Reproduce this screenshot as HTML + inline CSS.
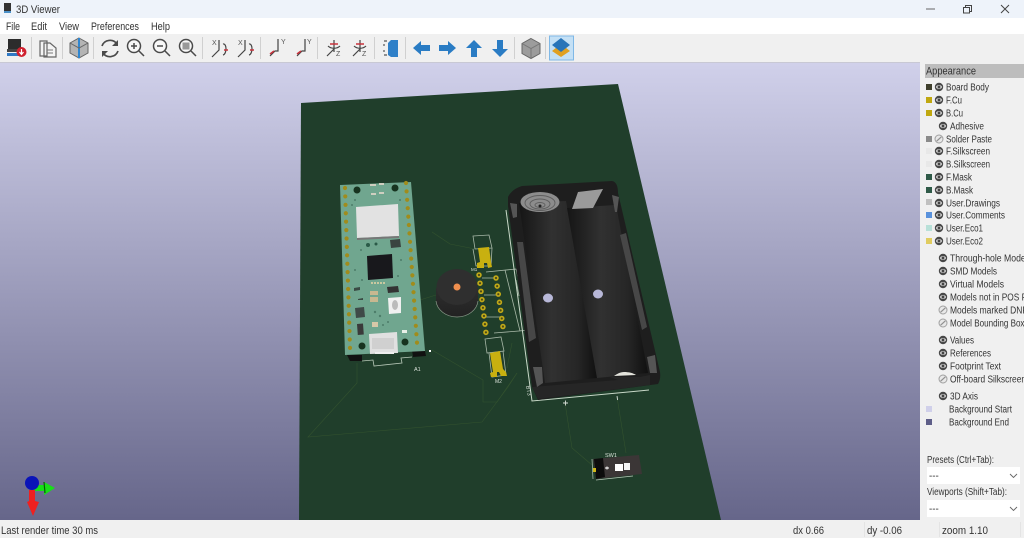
<!DOCTYPE html>
<html><head><meta charset="utf-8"><title>3D Viewer</title>
<style>
html,body{margin:0;padding:0;width:1024px;height:538px;overflow:hidden;background:#f0f0f0}
svg{display:block;filter:blur(.35px)}
text{font-family:"Liberation Sans",sans-serif;fill:#333}
.m{font-size:10.600px}
.p{font-size:9.800px}
.s{font-size:10.800px}
</style></head><body>
<svg width="1024" height="538" viewBox="0 0 1024 538" xmlns="http://www.w3.org/2000/svg" lengthAdjust="spacingAndGlyphs">
<defs>
<linearGradient id="bg" x1="0" y1="0" x2="0" y2="1"><stop offset="0" stop-color="#d0d0ea"/><stop offset="1" stop-color="#66668a"/></linearGradient>
<linearGradient id="cyl" x1="0" y1="0" x2="1" y2="0"><stop offset="0" stop-color="#151515"/><stop offset=".42" stop-color="#313131"/><stop offset=".75" stop-color="#262626"/><stop offset="1" stop-color="#101010"/></linearGradient>
<linearGradient id="bz" x1="0" y1="0" x2="0" y2="1"><stop offset="0" stop-color="#2e2e2e"/><stop offset="1" stop-color="#222"/></linearGradient>
<g id="eye"><circle r="4.200" fill="#484848"/><ellipse rx="3" ry="1.900" fill="#d4d4d4"/><circle r="1.400" fill="#444"/></g>
<g id="off"><circle r="4" fill="#e8e8e8" stroke="#a0a0a0" stroke-width="1"/><path d="M-2.400 2.200L2.400-2.200" stroke="#909090" stroke-width="1.200"/></g>
</defs>

<!-- chrome -->
<rect width="1024" height="18" fill="#eef3fa"/>
<rect y="18" width="1024" height="16" fill="#fff"/>
<rect y="34" width="1024" height="29" fill="#f0f0f0"/>
<rect y="62" width="920" height="1" fill="#c8c8d4"/>
<path d="M4 3h7v8H4z" fill="#333"/><path d="M4 11h7v2H4z" fill="#4a90c8"/>
<text x="16" y="13" font-size="11" textLength="44" lengthAdjust="spacingAndGlyphs">3D Viewer</text>
<path d="M926 9h9" stroke="#666" stroke-width="1"/>
<path d="M963.500 7.500h6v5.500h-6zM965.500 7.500v-2h6v6h-2" fill="none" stroke="#444" stroke-width="1"/>
<path d="M1001 5l8 8M1009 5l-8 8" stroke="#444" stroke-width="1"/>
<text class="m" x="6" y="30" textLength="14" lengthAdjust="spacingAndGlyphs">File</text>
<text class="m" x="31" y="30" textLength="16" lengthAdjust="spacingAndGlyphs">Edit</text>
<text class="m" x="59" y="30" textLength="20" lengthAdjust="spacingAndGlyphs">View</text>
<text class="m" x="91" y="30" textLength="48" lengthAdjust="spacingAndGlyphs">Preferences</text>
<text class="m" x="151" y="30" textLength="19" lengthAdjust="spacingAndGlyphs">Help</text>

<!-- toolbar separators -->
<path d="M31.500 37v22M62.500 37v22M93.500 37v22M202.500 37v22M260.500 37v22M317.500 37v22M374.500 37v22M405.500 37v22M514.500 37v22M545.500 37v22" stroke="#d0d0d0" stroke-width="1"/>
<!-- render icon -->
<rect x="8" y="39" width="13" height="10" fill="#2c2c2c"/><rect x="7" y="49" width="15" height="3" fill="#444"/><rect x="7" y="53" width="13" height="3" fill="#2f78c4"/>
<circle cx="21.500" cy="52" r="5" fill="#d0202e"/><path d="M21.500 49v5M19.500 52l2 2.500 2-2.500" stroke="#fff" fill="none" stroke-width="1.200"/>
<!-- copy -->
<path d="M40 41h7v15h-7zM44 43h6l6 5v9H44z" fill="#f4f4f4" stroke="#666" stroke-width="1.200"/><path d="M47 50h6M47 53h6" stroke="#777"/>
<!-- cube blue -->
<path d="M79 38l9 5v10l-9 5-9-5V43z" fill="#b4b4b4" stroke="#666"/><path d="M79 38v20" stroke="#2f86d0" stroke-width="2"/><path d="M70 43l9 5 9-5" fill="none" stroke="#666"/>
<!-- refresh -->
<path d="M102 46a8.500 8.500 0 0 1 15-2M118 51a8.500 8.500 0 0 1-15 2" fill="none" stroke="#4a4a4a" stroke-width="1.700"/><path d="M118 40v6h-6zM102 57v-6h6z" fill="#4a4a4a"/>
<!-- zoom -->
<circle cx="134" cy="46" r="6.500" fill="#f8f8f8" stroke="#4a4a4a" stroke-width="1.500"/><path d="M131 46h6M134 43v6M139 51l5 5" stroke="#4a4a4a" stroke-width="1.500"/>
<circle cx="160" cy="46" r="6.500" fill="#f8f8f8" stroke="#4a4a4a" stroke-width="1.500"/><path d="M157 46h6M165 51l5 5" stroke="#4a4a4a" stroke-width="1.500"/>
<circle cx="186" cy="46" r="6.500" fill="#f8f8f8" stroke="#4a4a4a" stroke-width="1.500"/><rect x="182.500" y="42.500" width="7" height="7" fill="#999"/><path d="M191 51l5 5" stroke="#4a4a4a" stroke-width="1.500"/>
<!-- rotate X -->
<g fill="none" stroke="#444" stroke-width="1.200">
<path d="M212 57l7-7V40"/><path d="M238 57l7-7V40"/>
<path d="M223 44c4-1 4 10 0 11"/><path d="M249 44c4-1 4 10 0 11"/>
<path d="M270 56l5-5h3V39"/><path d="M297 56l5-5h3V39"/>
<path d="M327 56l7-7"/><path d="M334 40v12"/><path d="M353 56l7-7"/><path d="M360 40v12"/>
<path d="M328 46c3 3 9 3 12 0M354 46c3 3 9 3 12 0"/>
</g>
<g><text x="212" y="45" style="font-size:7px;fill:#555">X</text><text x="238" y="45" style="font-size:7px;fill:#555">X</text><text x="281" y="44" style="font-size:7px;fill:#555">Y</text><text x="307" y="44" style="font-size:7px;fill:#555">Y</text><text x="336" y="56" style="font-size:7px;fill:#555">Z</text><text x="362" y="56" style="font-size:7px;fill:#555">Z</text></g>
<path d="M224 50h4M250 50h4M270 54l4-3M297 54l4-3M330 44h8M356 44h8" stroke="#c8323c" stroke-width="1.500"/>
<!-- ortho -->
<path d="M391 40h7v17h-7l-3-2V43z" fill="#2f80c8"/><path d="M384 41h3M384 44v2M384 50v2M384 55h3" stroke="#555" stroke-width="1.200" fill="none"/>
<!-- arrows -->
<path d="M413 48l8-7v4h9v6h-9v4z" fill="#2a7cc4"/>
<path d="M456 48l-8-7v4h-9v6h9v4z" fill="#2a7cc4"/>
<path d="M474 40l8 8h-5v9h-6v-9h-5z" fill="#2a7cc4"/>
<path d="M500 57l8-8h-5v-9h-6v9h-5z" fill="#2a7cc4"/>
<!-- cube gray -->
<path d="M531 38.500l9 5v10l-9 5-9-5v-10z" fill="#9c9c9c" stroke="#666"/><path d="M522 43.500l9 5 9-5M531 48.500v10" fill="none" stroke="#777"/>
<!-- active -->
<rect x="549.500" y="36" width="24" height="24" fill="#c4e0f5" stroke="#7fb8e6"/>
<path d="M561 44l9 7-9 6-9-6z" fill="#e0a020"/><path d="M561 38l9 7-9 7-9-7z" fill="#2874b8"/>

<!-- canvas -->
<rect x="0" y="63" width="920" height="457" fill="url(#bg)"/>
<path d="M301 103L618 84L721 520H299z" fill="#203e2b"/>

<!-- faint traces -->
<g fill="none" stroke="#33522f" stroke-width=".6">
<path d="M357 363v20L308 437 482 422 508 387 517 373"/>
<path d="M432 350l51 30v22h14l20-29"/>
<path d="M565 403l7 45 20 17M617 397l9 56"/>
<path d="M432 232l18 12 25 5M420 300l16-5M507 368l5-25"/>
</g>

<!-- silk under pico -->
<path d="M362 361l11-1 1 6 28-3-1-5 11-1" fill="none" stroke="#b8c8b8" stroke-width=".8"/>
<text x="414" y="371" style="font-size:5.500px;fill:#d8e0d8">A1</text>
<rect x="429" y="350" width="2" height="2" fill="#fff"/>

<!-- pico -->
<path d="M347 355h15v6h-12zM412 350l13 1 1 5-13 1z" fill="#111"/>
<path d="M340 185L411 182L425 351L345 355z" fill="#70a68f"/>
<path d="M345 188L350 348" stroke="#a08c1c" stroke-width="4.200" stroke-linecap="round" stroke-dasharray="0 8.420" fill="none"/>
<path d="M406 183L417 343" stroke="#a08c1c" stroke-width="4.200" stroke-linecap="round" stroke-dasharray="0 8.420" fill="none"/>
<circle cx="357" cy="190" r="3.500" fill="#17331f"/><circle cx="395" cy="188" r="3.500" fill="#17331f"/><circle cx="362" cy="346" r="3.500" fill="#17331f"/><circle cx="405" cy="342" r="3.500" fill="#17331f"/>
<path d="M370 185h6M379 184h5M371 194h5M379 193h5" stroke="#cfcfc0" stroke-width="2"/>
<path d="M356 207L398 204L399 236L357 238z" fill="#e2e2e2"/><path d="M357 238L399 236V238L357 240z" fill="#777"/>
<path d="M390 240l10-1 1 8-10 1z" fill="#3a4440"/>
<circle cx="368" cy="245" r="2" fill="#2a5a48"/><circle cx="376" cy="244" r="1.500" fill="#2a5a48"/>
<path d="M367 256L392 254L393 278L368 280z" fill="#18181c"/>
<path d="M387 287l11-1 1 6-11 1z" fill="#333"/>
<path d="M354 288l6-1v3l-6 1zM358 299l5-1v2h-5z" fill="#3a4a44"/>
<path d="M370 291h5v4h-5zM370 297h5v5h-5zM375 291h3v4h-3zM375 297h3v5h-3z" fill="#c8b890"/>
<path d="M371 283h15" stroke="#c8c8a0" stroke-width="2" stroke-dasharray="2 1"/>
<path d="M355 308l9-1 1 10-9 1z" fill="#3f4a48"/>
<path d="M357 324l6-.5 .8 11-6 .5z" fill="#3a3a3a"/>
<path d="M372 322h6v5h-6z" fill="#d8c8a8"/><path d="M402 330h5v3h-5z" fill="#e8f0e8"/>
<path d="M388 298L401 297L401 313L389 314z" fill="#f0f0f0"/><ellipse cx="395" cy="305" rx="3" ry="5" fill="#bbb"/>
<path d="M369 334L397 332L398 353L370 354z" fill="#e0e0e0"/><path d="M372 338h22v11h-22z" fill="#d0d0d0"/><path d="M375 352h19v2h-19z" fill="#eee"/>
<g fill="#4d7d6a"><circle cx="352" cy="205" r="1"/><circle cx="361" cy="250" r="1"/><circle cx="355" cy="270" r="1"/><circle cx="362" cy="280" r="1"/><circle cx="401" cy="260" r="1"/><circle cx="398" cy="276" r="1"/><circle cx="375" cy="312" r="1.200"/><circle cx="380" cy="316" r="1.200"/><circle cx="383" cy="325" r="1"/><circle cx="355" cy="200" r="1"/><circle cx="400" cy="200" r="1"/><circle cx="388" cy="322" r="1"/></g>

<!-- M1 / connector / M2 -->
<g fill="none" stroke="#a8b8a8" stroke-width=".8">
<path d="M473 236l16-1 3 13-17 1z"/><path d="M473 249l3 17h15l1-18"/>
<path d="M486 272l30-3 15 61-37 3"/><path d="M505 270l15 61M516 280l3 16"/>
<path d="M485 339l16-2 3 14-17 2z"/><path d="M489 353l3 24 14-2-3-24"/>
<path d="M482 278l14 0M484 295l16 0M486 317l16 0"/>
</g>
<path d="M478 248L489 247 491 262 492 267 488 268 487 263 484 263 484 268 477 268 477 263 480 262z" fill="#c8b010"/>
<path d="M490 353L500 351 503 369 506 372 507 376 501 376 499 372 497 372 497 377 491 377 490 373 493 372z" fill="#c8b010"/>
<path d="M479 275L486 333" stroke="#c0a818" stroke-width="5.500" stroke-linecap="round" stroke-dasharray="0 8.250" fill="none"/>
<path d="M496 278L503 327" stroke="#c0a818" stroke-width="5.500" stroke-linecap="round" stroke-dasharray="0 8.170" fill="none"/>
<path d="M479 275L486 333" stroke="#4a4a18" stroke-width="2.200" stroke-linecap="round" stroke-dasharray="0 8.250" fill="none"/>
<path d="M496 278L503 327" stroke="#4a4a18" stroke-width="2.200" stroke-linecap="round" stroke-dasharray="0 8.170" fill="none"/>
<text transform="translate(471 271)" style="font-size:4.500px;fill:#d8e0d8">M1</text>
<text transform="translate(495 383)" style="font-size:5px;fill:#d8e0d8">M2</text>

<!-- buzzer -->
<path d="M436 288v13c1 9 10 16 21 16s20-7 21-16v-13z" fill="url(#bz)"/>
<path d="M436 301c1 9 10 16 21 16s20-7 21-16" fill="none" stroke="#8a9a8a" stroke-width=".7"/>
<ellipse cx="457" cy="287" rx="20.500" ry="18" fill="#2f2f2f"/>
<circle cx="457" cy="287" r="3.500" fill="#ef8f4e"/>

<!-- battery holder -->
<path d="M506 210L532 401 649 390" fill="none" stroke="#c8d8c8" stroke-width="1"/>
<path d="M508 197Q512 189 522 186L612 181Q618 182 618 193L660 372Q661 379 658 384L538 400 532 387 508 206z" fill="#1e1e1e"/>
<path d="M519 203L566 201L597 378L545 383z" fill="url(#cyl)"/>
<path d="M567 208L616 205L648 373L597 378z" fill="url(#cyl)"/>
<ellipse cx="540" cy="202" rx="19.500" ry="10" fill="#8c8c8c"/>
<g fill="none" stroke="#5e5e5e" stroke-width=".9"><ellipse cx="540" cy="203" rx="15" ry="7.500"/><ellipse cx="540" cy="204" rx="10" ry="5"/><ellipse cx="540" cy="205" rx="5" ry="2.500"/></g>
<circle cx="540" cy="206" r="1.500" fill="#222"/>
<path d="M578 192L603 189L593 208L572 209z" fill="#9a9a9a"/>
<ellipse cx="548" cy="298" rx="5" ry="4.500" fill="#b8b8d8"/>
<ellipse cx="598" cy="294" rx="5" ry="4.500" fill="#b8b8d8"/>
<path d="M610 377h30l10-2v10l-112 14-6-12 86-7z" fill="#262626"/>
<path d="M624 372c5 0 9 1 12 3l-22 1c3-2 6-4 10-4z" fill="#e4e4dc"/>
<path d="M517 242L523 242L536 338L529 342z" fill="#474747"/>
<path d="M620 235L626 233L647 327L642 330z" fill="#474747"/>
<path d="M510 203L517 204 517 217 513 218zM533 367L542 367 543 383 537 387zM612 195L619 197 617 212 615 212zM647 357L655 355 657 373 650 373z" fill="#555"/>
<text transform="translate(526 386) rotate(80)" style="font-size:5.500px;fill:#d8e0d8">BT3</text>
<path d="M563 403h5M565.500 400.500v5" stroke="#d8e0d8" stroke-width=".9"/>
<path d="M617 396l.6 4" stroke="#d8e0d8" stroke-width=".9"/>

<!-- SW1 -->
<text x="605" y="457" style="font-size:5.500px;fill:#d8e0d8">SW1</text>
<path d="M593 459L639 455L642 474L596 479z" fill="#3b3636"/>
<path d="M594 459l9-1 2 19-9 2z" fill="#0c0c0c"/>
<path d="M592 459l1 20M596 480l37-4" stroke="#b8c8b8" fill="none" stroke-width=".7"/>
<rect x="593" y="468" width="3" height="4" fill="#d0b818"/>
<path d="M605 468h4M607 466.500v3" stroke="#fff" fill="none"/>
<rect x="615" y="464" width="8" height="7" fill="#fff"/><rect x="624" y="463" width="6" height="7" fill="#f4f4f4"/>

<!-- axis -->
<path d="M33 485h11v-3l11 6-11 7v-4H33z" fill="#18e018"/>
<path d="M44 482l1 11" stroke="#0a5a0a" stroke-width="1.200"/>
<path d="M29 490h6v11l4 1-6 14-6-14 2-1z" fill="#ee2020"/>
<circle cx="32" cy="483" r="7" fill="#0a14b8"/>

<!-- right panel -->
<rect x="920" y="63" width="104" height="457" fill="#f0f0f0"/>
<rect x="925" y="64" width="99" height="14" fill="#bdbdbd"/>
<text x="926" y="74.500" style="font-size:10.800px" textLength="50" lengthAdjust="spacingAndGlyphs">Appearance</text>

<g>
<rect x="926" y="84" width="6" height="6" fill="#3f3f2c"/><use href="#eye" x="939" y="87"/><text class="p" x="946" y="90.500" textLength="43" lengthAdjust="spacingAndGlyphs">Board Body</text>
<rect x="926" y="97" width="6" height="6" fill="#c0a810"/><use href="#eye" x="939" y="100"/><text class="p" x="946" y="103.500" textLength="16" lengthAdjust="spacingAndGlyphs">F.Cu</text>
<rect x="926" y="110" width="6" height="6" fill="#c0a810"/><use href="#eye" x="939" y="113"/><text class="p" x="946" y="116.500" textLength="17" lengthAdjust="spacingAndGlyphs">B.Cu</text>
<use href="#eye" x="943" y="126"/><text class="p" x="950" y="129.500" textLength="34" lengthAdjust="spacingAndGlyphs">Adhesive</text>
<rect x="926" y="136" width="6" height="6" fill="#8a8a8a"/><use href="#off" x="939" y="139"/><text class="p" x="946" y="142.500" textLength="46" lengthAdjust="spacingAndGlyphs">Solder Paste</text>
<rect x="926" y="148" width="6" height="6" fill="#e8e8e8"/><use href="#eye" x="939" y="151"/><text class="p" x="946" y="154.500" textLength="44" lengthAdjust="spacingAndGlyphs">F.Silkscreen</text>
<rect x="926" y="161" width="6" height="6" fill="#e8e8e8"/><use href="#eye" x="939" y="164"/><text class="p" x="946" y="167.500" textLength="44" lengthAdjust="spacingAndGlyphs">B.Silkscreen</text>
<rect x="926" y="174" width="6" height="6" fill="#2f5a48"/><use href="#eye" x="939" y="177"/><text class="p" x="946" y="180.500" textLength="26" lengthAdjust="spacingAndGlyphs">F.Mask</text>
<rect x="926" y="187" width="6" height="6" fill="#2f5a48"/><use href="#eye" x="939" y="190"/><text class="p" x="946" y="193.500" textLength="27" lengthAdjust="spacingAndGlyphs">B.Mask</text>
<rect x="926" y="199" width="6" height="6" fill="#c0c0c0"/><use href="#eye" x="939" y="203"/><text class="p" x="946" y="206.500" textLength="54" lengthAdjust="spacingAndGlyphs">User.Drawings</text>
<rect x="926" y="212" width="6" height="6" fill="#5a92dc"/><use href="#eye" x="939" y="215"/><text class="p" x="946" y="218.500" textLength="59" lengthAdjust="spacingAndGlyphs">User.Comments</text>
<rect x="926" y="225" width="6" height="6" fill="#b8e0d8"/><use href="#eye" x="939" y="228"/><text class="p" x="946" y="231.500" textLength="37" lengthAdjust="spacingAndGlyphs">User.Eco1</text>
<rect x="926" y="238" width="6" height="6" fill="#e0cc60"/><use href="#eye" x="939" y="241"/><text class="p" x="946" y="244.500" textLength="37" lengthAdjust="spacingAndGlyphs">User.Eco2</text>

<use href="#eye" x="943" y="258"/><text class="p" x="950" y="261.500" textLength="82" lengthAdjust="spacingAndGlyphs">Through-hole Models</text>
<use href="#eye" x="943" y="271"/><text class="p" x="950" y="274.500" textLength="47" lengthAdjust="spacingAndGlyphs">SMD Models</text>
<use href="#eye" x="943" y="284"/><text class="p" x="950" y="287.500" textLength="54" lengthAdjust="spacingAndGlyphs">Virtual Models</text>
<use href="#eye" x="943" y="297"/><text class="p" x="950" y="300.500" textLength="85" lengthAdjust="spacingAndGlyphs">Models not in POS File</text>
<use href="#off" x="943" y="310"/><text class="p" x="950" y="313.500" textLength="78" lengthAdjust="spacingAndGlyphs">Models marked DNP</text>
<use href="#off" x="943" y="323"/><text class="p" x="950" y="326.500" textLength="83" lengthAdjust="spacingAndGlyphs">Model Bounding Boxes</text>
<use href="#eye" x="943" y="340"/><text class="p" x="950" y="343.500" textLength="24" lengthAdjust="spacingAndGlyphs">Values</text>
<use href="#eye" x="943" y="353"/><text class="p" x="950" y="356.500" textLength="41" lengthAdjust="spacingAndGlyphs">References</text>
<use href="#eye" x="943" y="366"/><text class="p" x="950" y="369.500" textLength="51" lengthAdjust="spacingAndGlyphs">Footprint Text</text>
<use href="#off" x="943" y="379"/><text class="p" x="950" y="382.500" textLength="76" lengthAdjust="spacingAndGlyphs">Off-board Silkscreen</text>
<use href="#eye" x="943" y="396"/><text class="p" x="950" y="399.500" textLength="28" lengthAdjust="spacingAndGlyphs">3D Axis</text>
<rect x="926" y="406" width="6" height="6" fill="#d0d0ea"/><text class="p" x="949" y="412.500" textLength="63" lengthAdjust="spacingAndGlyphs">Background Start</text>
<rect x="926" y="419" width="6" height="6" fill="#5e5e88"/><text class="p" x="949" y="425.500" textLength="60" lengthAdjust="spacingAndGlyphs">Background End</text>
</g>

<text class="p" x="927" y="463" textLength="67" lengthAdjust="spacingAndGlyphs">Presets (Ctrl+Tab):</text>
<rect x="927" y="467" width="93" height="17" fill="#fff"/>
<text class="p" x="929" y="479">---</text>
<path d="M1010 474l3.500 3.500 3.500-3.500" fill="none" stroke="#666" stroke-width=".9"/>
<text class="p" x="927" y="495" textLength="80" lengthAdjust="spacingAndGlyphs">Viewports (Shift+Tab):</text>
<rect x="927" y="500" width="93" height="17" fill="#fff"/>
<text class="p" x="929" y="512">---</text>
<path d="M1010 507l3.500 3.500 3.500-3.500" fill="none" stroke="#666" stroke-width=".9"/>

<!-- status -->
<rect y="520" width="1024" height="18" fill="#f0f0f0"/>
<text class="s" x="1" y="534" textLength="97" lengthAdjust="spacingAndGlyphs">Last render time 30 ms</text>
<text class="s" x="793" y="534" textLength="31" lengthAdjust="spacingAndGlyphs">dx 0.66</text>
<text class="s" x="867" y="534" textLength="35" lengthAdjust="spacingAndGlyphs">dy -0.06</text>
<text class="s" x="942" y="534" textLength="46" lengthAdjust="spacingAndGlyphs">zoom 1.10</text>
<path d="M864.500 522v15M939.500 522v15M1020.500 522v15" stroke="#e4e4e4"/>
</svg>
</body></html>
